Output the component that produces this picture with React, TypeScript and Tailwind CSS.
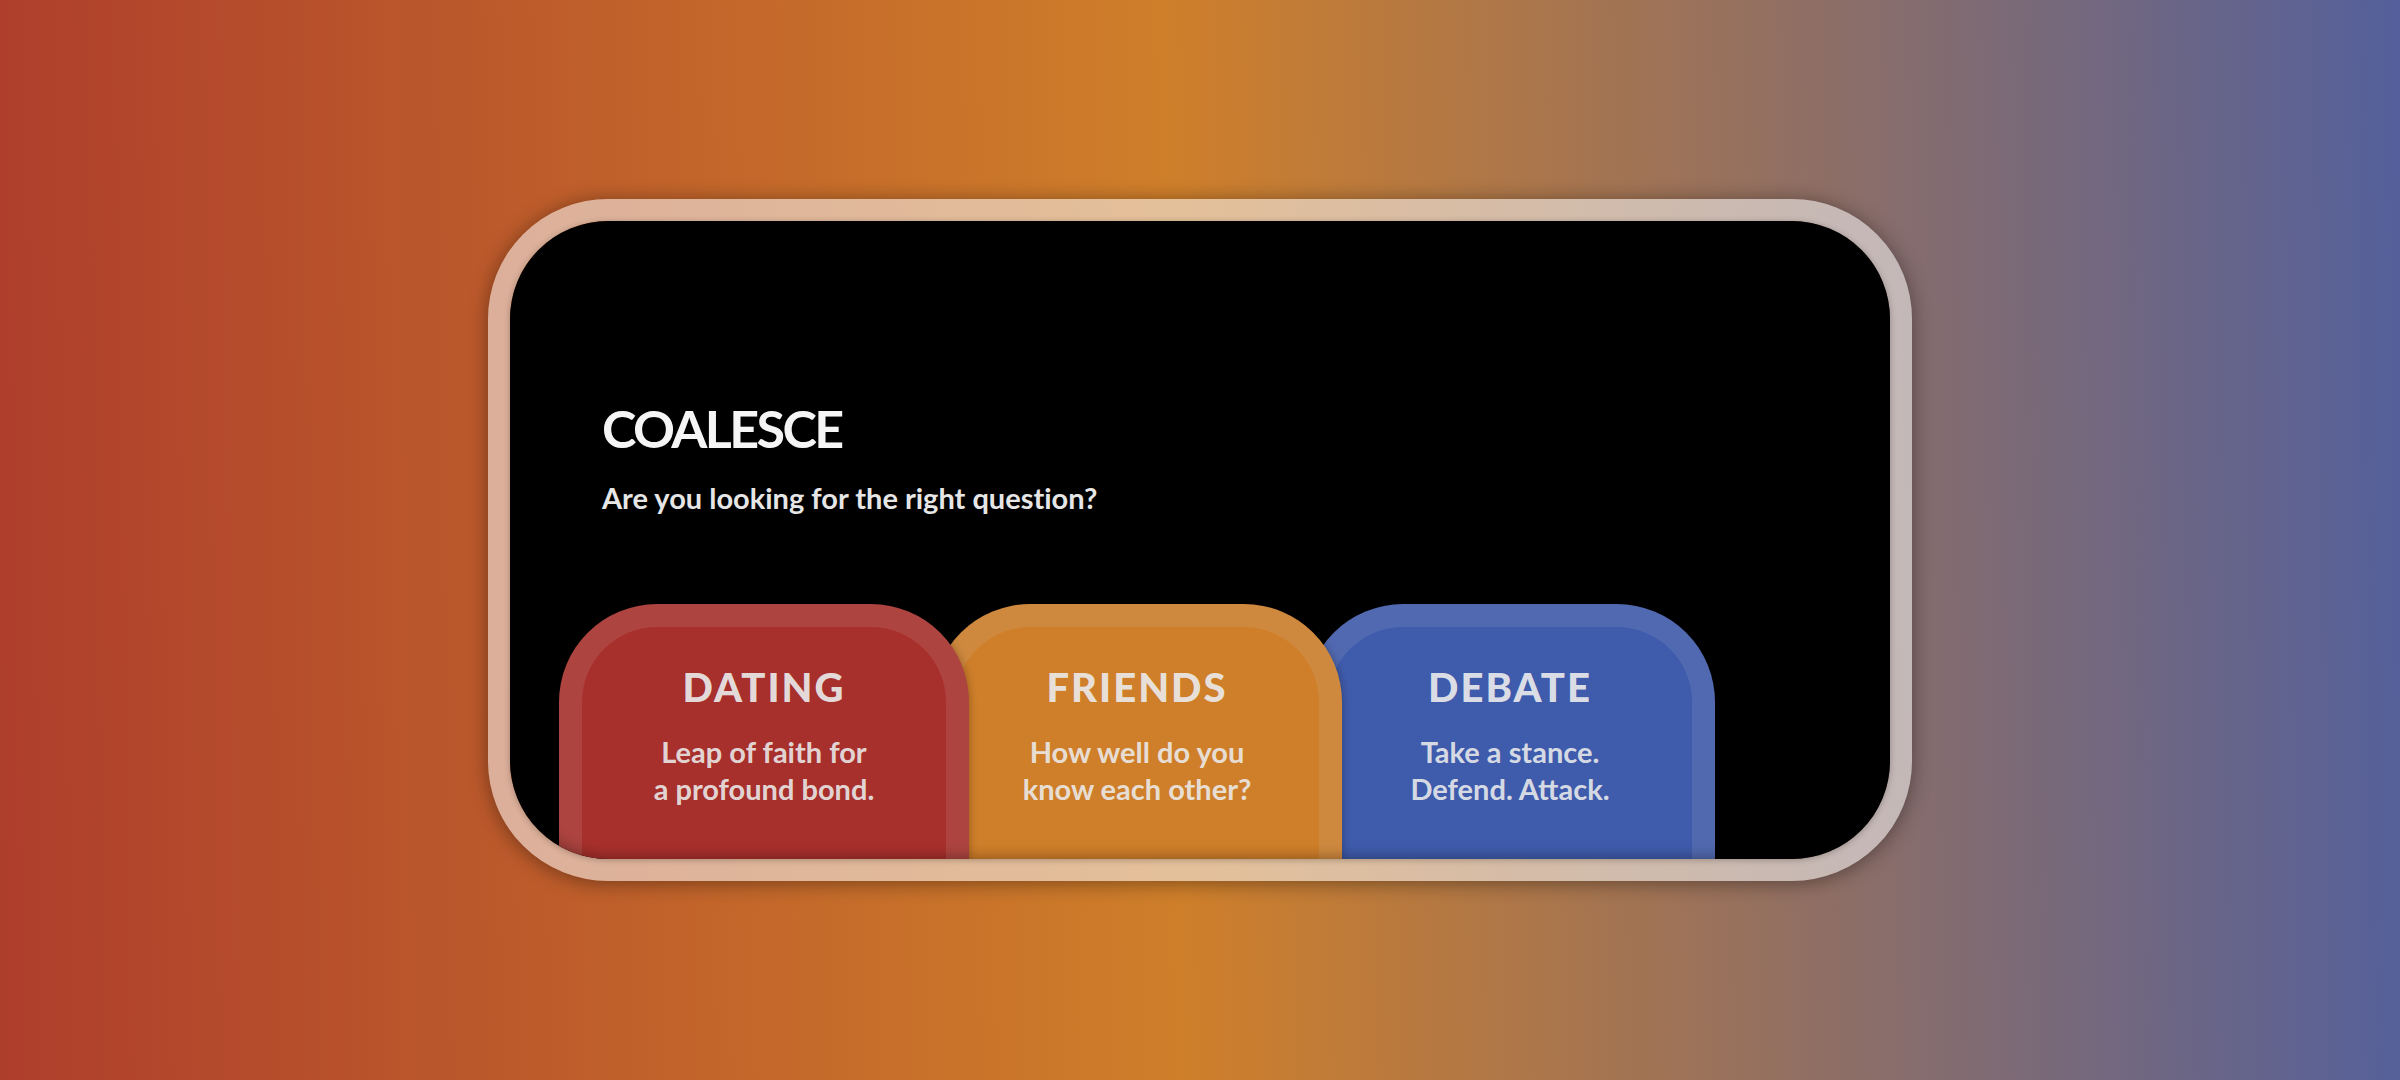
const cards = [
  { title: "DATING", lines: ["Leap of faith for", "a profound bond."], tone: "z-30 bg-[#a8302c]" },
  { title: "FRIENDS", lines: ["How well do you", "know each other?"], tone: "z-20 -ml-[37px] bg-[#cf7f2a]" },
  { title: "DEBATE", lines: ["Take a stance.", "Defend. Attack."], tone: "z-10 -ml-[37px] bg-[#3f5bab]" },
];

export default function App() {
  return (
    <main className="flex min-h-screen items-center justify-center bg-[linear-gradient(89deg,#ae3e2c,#cf7f2a_49%,#54609b)] font-['Lato',sans-serif]">
      <div className="w-full max-w-[1424px] rounded-[120px] border-[22px] border-[#f5f5f5]/55 bg-clip-padding shadow-[0_2px_20px_rgba(0,0,0,0.4)]">
        <div className="relative overflow-hidden rounded-[98px] bg-black px-[49px] pt-[173px] shadow-[0_1px_6px_rgba(0,0,0,0.25)]">
          <header className="px-[43px]">
            <h1 className="text-[52px] leading-[68px] font-bold tracking-tighter text-[#f5f5f5]">COALESCE</h1>
            <p className="mt-[18px] text-[29px] leading-9 font-bold text-[#e6e6e6] [font-variant-ligatures:none]">
              Are you looking for the right question?
            </p>
          </header>
          <nav className="mt-[88px] flex">
            {cards.map((card) => (
              <button
                key={card.title}
                type="button"
                className={`${card.tone} relative flex h-[255px] w-[410px] shrink-0 flex-col items-center rounded-t-[98px] border-[23px] border-b-0 border-[#d2d2d2]/12 pt-[38px] text-center shadow-[0_0_8px_rgba(0,0,0,0.3)]`}
              >
                <span className="text-[40px] leading-[44px] font-black tracking-wider text-[#ebebeb]/93">{card.title}</span>
                <span className="mt-6 text-[29px] leading-[37px] font-bold text-[#ebebeb]/90">
                  {card.lines[0]}
                  <br />
                  {card.lines[1]}
                </span>
              </button>
            ))}
          </nav>
          <div className="pointer-events-none absolute inset-0 z-40 rounded-[98px] shadow-[inset_0_0_16px_rgba(0,0,0,0.4)]" />
        </div>
      </div>
    </main>
  );
}
